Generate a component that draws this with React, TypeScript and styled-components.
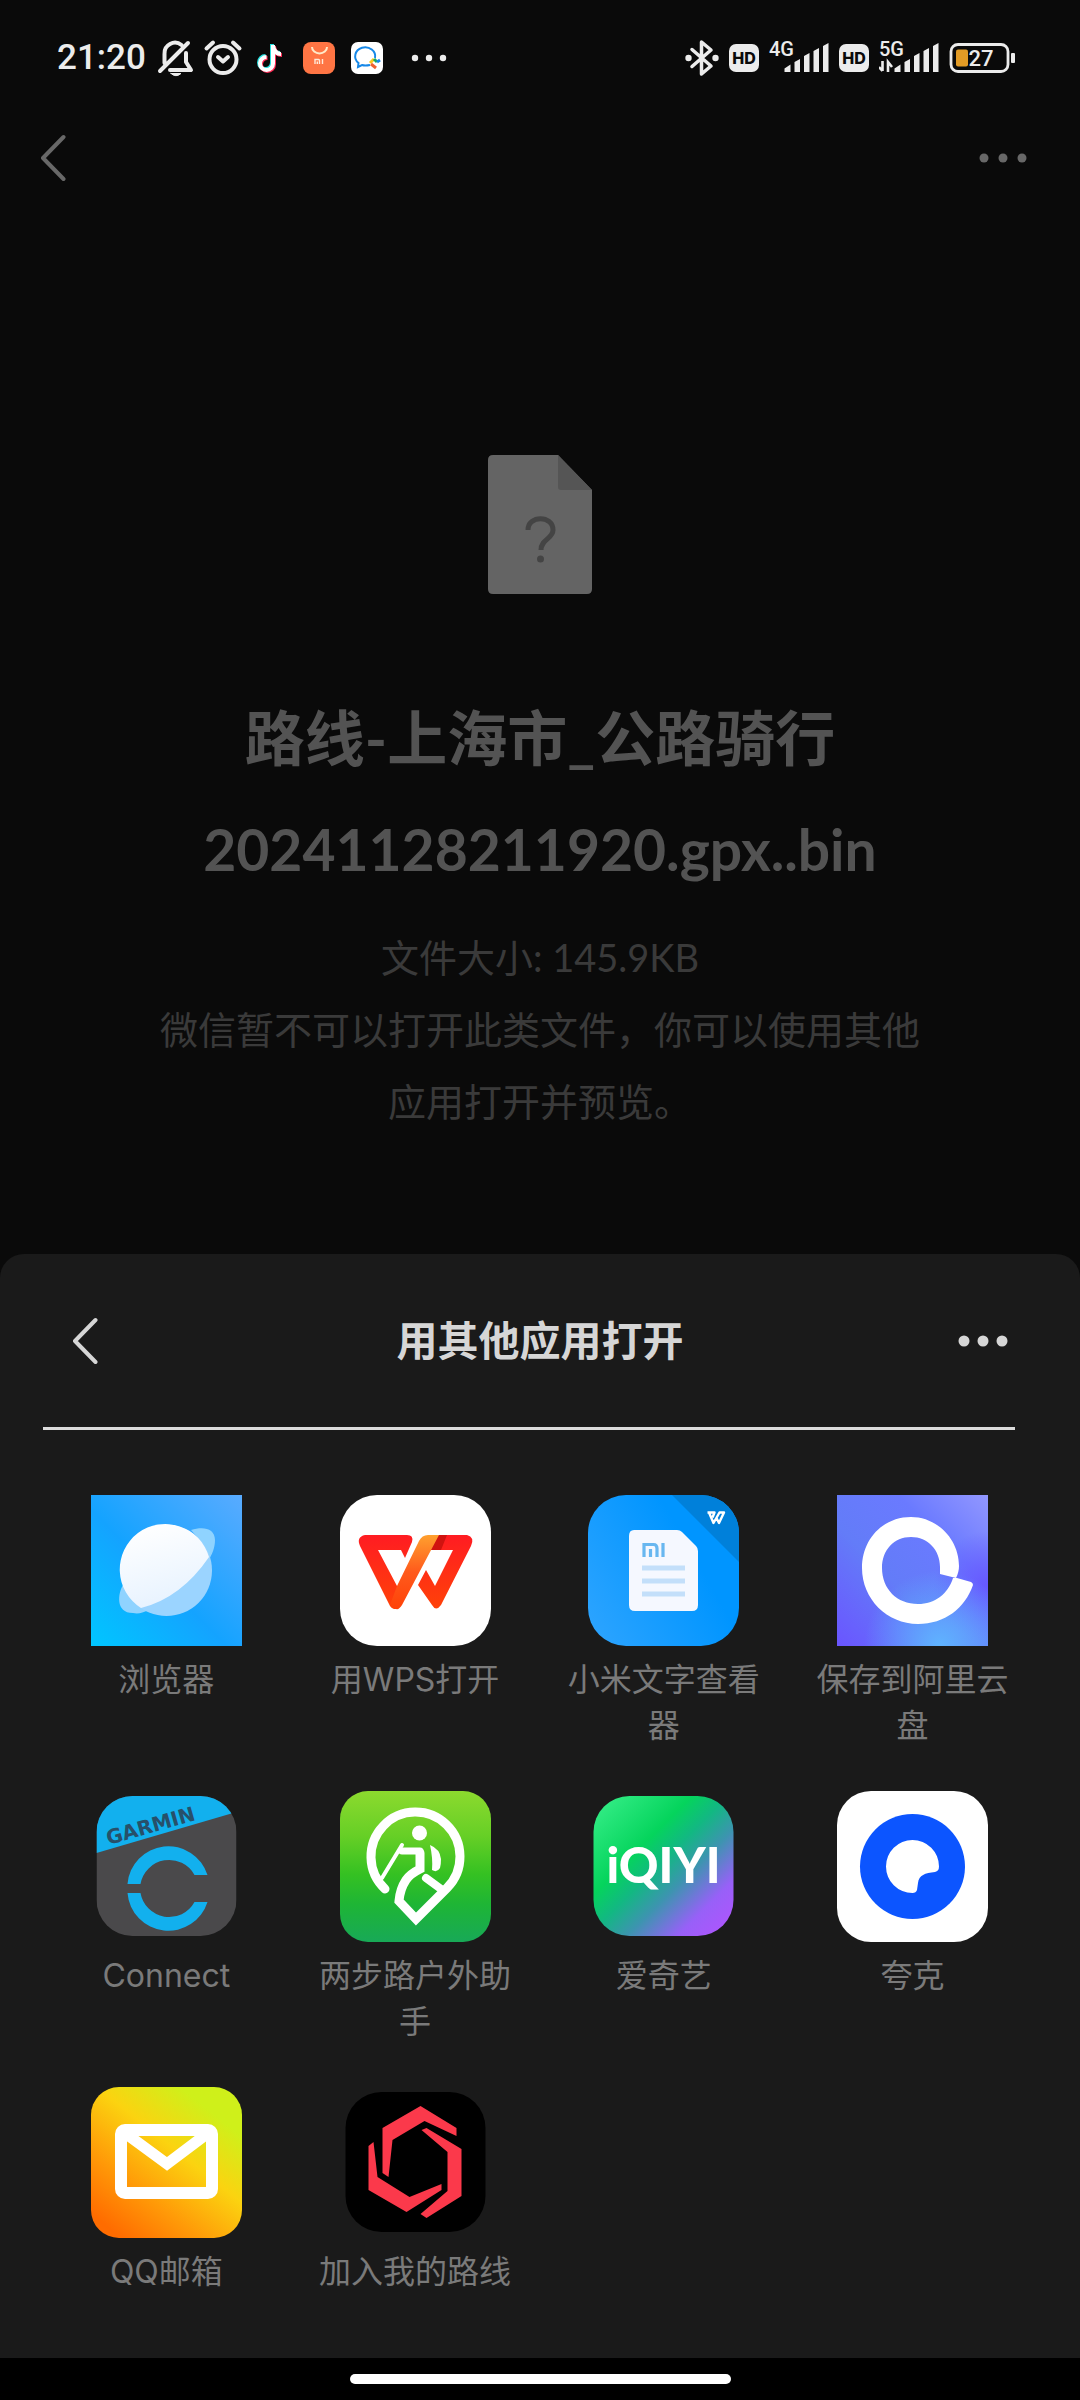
import React from 'react';
import styled, { createGlobalStyle } from 'styled-components';

const GlobalStyle = createGlobalStyle`
  *, *::before, *::after { box-sizing: border-box; }
  body { margin: 0; background: #000; }
  button { border: 0; padding: 0; background: none; color: inherit; font: inherit; cursor: pointer; }
`;

const Screen = styled.div`
  display: flex;
  flex-direction: column;
  min-height: 100vh;
  background: #0a0a0a;
  font-family: Lato, "Noto Sans CJK SC", sans-serif;
`;

const StatusBar = styled.div`
  display: flex;
  align-items: center;
  justify-content: space-between;
  height: 116px;
  padding: 0 64px 0 57px;
  color: #ececec;
`;

const StatusGroup = styled.div<{ $gap: number }>`
  display: flex;
  align-items: center;
  gap: ${(p) => p.$gap}px;
`;

const Clock = styled.time`
  min-width: 85px;
  font: 500 35px/40px Roboto, sans-serif;
`;

const StatusIcon = styled.svg`
  display: block;
  height: 38px;
  flex: none;
  overflow: visible;
`;

const MoreNotices = styled(StatusIcon)`
  margin-left: 14px;
`;

const SignalBox = styled.span`
  display: flex;
  flex-direction: column;
  width: 60px;
  height: 40px;
  font: 500 20px/22px Roboto, sans-serif;
`;

const SignalBars = styled.svg`
  display: block;
  width: 60px;
  height: 33px;
  margin-top: -17px;
  flex: none;
`;

const HdBadge = styled.span`
  width: 30px;
  height: 28px;
  border-radius: 7px;
  background: #ececec;
  color: #0a0a0a;
  font: 800 16px/28px Inter, sans-serif;
  text-align: center;
`;

const NavBar = styled.header`
  display: flex;
  align-items: center;
  justify-content: space-between;
  height: 84px;
  padding: 0 52px 0 40px;
  color: #686868;
`;

const IconButton = styled.button`
  display: flex;
  align-items: center;
  height: 48px;
`;

const FilePanel = styled.main`
  display: flex;
  flex: 1;
  flex-direction: column;
  align-items: center;
  padding: 255px 150px 112px;
  text-align: center;
`;

const FileName = styled.h1`
  max-width: 780px;
  margin: 89px 0 17px;
  color: #535353;
  font-size: 60px;
  font-weight: 700;
  line-height: 110px;
  overflow-wrap: anywhere;
`;

const FileStamp = styled.span`
  font-size: 57px;
`;

const FileNote = styled.p`
  max-width: 780px;
  margin: 0;
  color: #3a3a3a;
  font-size: 38px;
  line-height: 72px;
`;

const Sheet = styled.section`
  border-radius: 24px 24px 0 0;
  background: #1a1a1a;
`;

const SheetHeader = styled.header`
  display: grid;
  grid-template-columns: 56px 1fr 56px;
  align-items: center;
  height: 176px;
  margin: 0 65px 0 43px;
  padding: 0 7px 0 29px;
  border-bottom: 3px solid #dcdcdc;
  color: #d6d6d6;

  ${IconButton}:last-child {
    justify-self: end;
  }
`;

const SheetTitle = styled.h2`
  margin: 0;
  font-size: 41px;
  font-weight: 700;
  line-height: 56px;
  text-align: center;
`;

const AppGrid = styled.ul`
  display: grid;
  grid-template-columns: repeat(4, 1fr);
  grid-auto-rows: minmax(255px, auto);
  row-gap: 41px;
  margin: 0;
  padding: 65px 43px 16px 42px;
  list-style: none;
`;

const AppButton = styled.button`
  display: flex;
  flex-direction: column;
  align-items: center;
  gap: 11px;
  width: 100%;
`;

const AppArt = styled.svg`
  display: block;
  width: 151px;
  height: 151px;
`;

const AppLabel = styled.span`
  max-width: 210px;
  color: #7a7a7a;
  font-family: Inter, "Noto Sans CJK SC", sans-serif;
  font-size: 32px;
  line-height: 46px;
`;

const HomeBar = styled.footer`
  display: flex;
  align-items: center;
  justify-content: center;
  height: 42px;
  background: #000;
`;

const HomeHandle = styled.div`
  width: 381px;
  height: 10px;
  border-radius: 5px;
  background: #fff;
`;

const Chevron = () => (
  <svg width="26" height="48" viewBox="0 0 26 48" fill="none" stroke="currentColor" strokeWidth="4" strokeLinecap="round" strokeLinejoin="round" aria-hidden="true">
    <path d="M23.500 3 3 24l20.500 21" />
  </svg>
);

const Dots = ({ r }: { r: number }) => (
  <svg width="50" height="14" viewBox="0 0 50 14" fill="currentColor" aria-hidden="true">
    <circle cx="6" cy="7" r={r} />
    <circle cx="25" cy="7" r={r} />
    <circle cx="44" cy="7" r={r} />
  </svg>
);

const Signal = ({ label, busy }: { label: string; busy?: boolean }) => (
  <SignalBox>
    {label}
    <SignalBars viewBox="0 0 60 33" fill="currentColor" aria-hidden="true">
      <path d="M15.500 29v-3.500l6-4V29zM25.500 29V19l5.500-3v13zM35 29V13l5.500-3v19zM44.500 29V8l5.500-3v24zM54 29V3l5.500-3v29z" />
      {busy && <path d="M3.500 18v10M0 24l3.500 4M9 29V19l4 5" fill="none" stroke="currentColor" strokeWidth="2.600" />}
    </SignalBars>
  </SignalBox>
);

const BrowserIcon = () => (
  <AppArt viewBox="0 0 151 151" aria-hidden="true">
    <defs>
      <linearGradient id="br-bg" x1="0" y1="1" x2="1" y2="0">
        <stop offset="0" stopColor="#00c6ff" />
        <stop offset=".45" stopColor="#14a3ff" />
        <stop offset="1" stopColor="#59abff" />
      </linearGradient>
      <linearGradient id="br-w" x1=".3" y1="0" x2=".6" y2="1">
        <stop offset="0" stopColor="#fff" />
        <stop offset="1" stopColor="#e6f2ff" />
      </linearGradient>
    </defs>
    <path fill="url(#br-bg)" d="M0 0h151v151H0z" />
    <path fill="#8fd3ff" d="M100 35c12-4 24-2 24 10 0 8-3 15-7 21q-5-19-17-31zM32 90c-5 8-8 28 10 28 5 1 10 0 15-3q-17-8-25-25z" />
    <circle cx="75.500" cy="75.500" r="45.500" fill="#9bd4ff" />
    <path fill="url(#br-w)" d="M118 62A45.500 45.500 0 1 0 50 113Q90 103 118 62z" />
  </AppArt>
);

const WpsIcon = () => (
  <AppArt viewBox="0 0 151 151" aria-hidden="true">
    <defs>
      <linearGradient id="wps-r" x1="0" y1="0" x2="0" y2="1">
        <stop offset="0" stopColor="#ff1c22" />
        <stop offset="1" stopColor="#ff4208" />
      </linearGradient>
      <linearGradient id="wps-o" x1="0" y1="0" x2="0" y2="1">
        <stop offset="0" stopColor="#ffa02e" />
        <stop offset=".5" stopColor="#ff5a1c" />
        <stop offset="1" stopColor="#ff4208" />
      </linearGradient>
    </defs>
    <rect width="151" height="151" rx="37" fill="#fff" />
    <path fill="url(#wps-r)" d="M25 40h42q7 0 5 7l-7 16-4-8H38l19 36 3 18q-5 9-10 2L20 51q-4-9 5-11zM93 40h34q8 2 4 11L101 110q-5 7-9 0L78 90l8-15 9 16 18-36H85z" />
    <path fill="#d0130f" d="M97 40h10l-6 15H90z" />
    <path fill="url(#wps-o)" d="M57 91 79 46q3-6 9-6h11L62 110q-3 5-6 4-4 0-6-4z" />
  </AppArt>
);

const MiDocIcon = () => (
  <AppArt viewBox="0 0 151 151" aria-hidden="true">
    <defs>
      <linearGradient id="mi-bg" x1="0" y1=".8" x2=".7" y2=".4">
        <stop offset="0" stopColor="#2aa3ff" />
        <stop offset="1" stopColor="#0095ff" />
      </linearGradient>
      <clipPath id="mi-clip"><rect width="151" height="151" rx="38" /></clipPath>
    </defs>
    <g clipPath="url(#mi-clip)">
      <path fill="url(#mi-bg)" d="M0 0h151v151H0z" />
      <path fill="#0080da" d="M84 0h67v67z" />
    </g>
    <path d="M119.500 17.500h7l-2 5M121 17.500l4.500 10.500 6-10.500h4.500l-5 10.500-2.500-5" fill="none" stroke="#fff" strokeWidth="2.400" strokeLinejoin="round" />
    <path fill="#f5f8ff" d="M46 35h43q3 0 5 2l14 14q2 2 2 5v54q0 6-6 6H47q-6 0-6-6V41q0-6 5-6z" />
    <path d="M56 62V49.500h9.500q3.500 0 3.500 4V62M62.500 54v8M75 48v14" fill="none" stroke="#68b7f0" strokeWidth="3.200" />
    <path d="M54 73h43M54 86h43M54 99h43" stroke="#c3dffa" strokeWidth="5" />
  </AppArt>
);

const CloudDriveIcon = () => (
  <AppArt viewBox="0 0 151 151" aria-hidden="true">
    <defs>
      <linearGradient id="al-bg" x1="0" y1="1" x2="1" y2="0">
        <stop offset="0" stopColor="#6a55ff" />
        <stop offset=".4" stopColor="#637cf8" />
        <stop offset=".7" stopColor="#6a7aff" />
        <stop offset="1" stopColor="#9297ff" />
      </linearGradient>
      <radialGradient id="al-c" cx=".68" cy="1" r=".5">
        <stop offset="0" stopColor="#5fb4ff" />
        <stop offset="1" stopColor="#5fb4ff" stopOpacity="0" />
      </radialGradient>
      <radialGradient id="al-p" cx="1" cy=".6" r=".36">
        <stop offset="0" stopColor="#6758ff" />
        <stop offset="1" stopColor="#6758ff" stopOpacity="0" />
      </radialGradient>
    </defs>
    <path fill="url(#al-bg)" d="M0 0h151v151H0z" />
    <path fill="url(#al-p)" d="M0 0h151v151H0z" />
    <path fill="url(#al-c)" d="M0 0h151v151H0z" />
    <path fill="#fff" d="M103 79l16 4c2-4 3-8 3-12 0-27-22-49-48-49-28 0-49 22-49 51 0 31 25 56 56 56 27 0 47-16 55-39q0-2-2-3l-14-4h-4c-5 16-18 26-35 26-21 0-36-15-36-36 0-18 12-31 29-31s29 13 29 30z" />
  </AppArt>
);

const GarminIcon = () => (
  <AppArt viewBox="0 0 151 151" aria-hidden="true">
    <defs><clipPath id="ga-clip"><rect width="140" height="140" rx="36" /></clipPath></defs>
    <g transform="translate(5.500 5)">
      <g clipPath="url(#ga-clip)">
        <path fill="#4a494b" d="M0 0h140v140H0z" />
        <path fill="#12b0ee" d="M0 0h140v16L0 57z" />
      </g>
      <text x="12" y="49" transform="rotate(-16 12 49)" fill="#27506a" fontFamily="DejaVu Sans, sans-serif" fontWeight="700" fontSize="20">GARMIN</text>
      <path fill="#12b0ee" d="M31 88A41 41 0 0 1 111 79H98A29 29 0 0 0 44 88zM31 97A41 41 0 0 0 111 106H98A29 29 0 0 1 44 97z" />
    </g>
  </AppArt>
);

const HikingIcon = () => (
  <AppArt viewBox="0 0 151 151" aria-hidden="true">
    <defs>
      <linearGradient id="hk-bg" x1="0" y1="0" x2="0" y2="1">
        <stop offset="0" stopColor="#8cda2e" />
        <stop offset=".3" stopColor="#66cf26" />
        <stop offset=".55" stopColor="#35c122" />
        <stop offset=".75" stopColor="#1eb535" />
        <stop offset="1" stopColor="#18a957" />
      </linearGradient>
    </defs>
    <rect width="151" height="151" rx="28" fill="url(#hk-bg)" />
    <g fill="none" stroke="#fff" strokeLinecap="round">
      <path strokeWidth="9" d="M45 98A44.500 44.500 0 1 1 107 97L76 128 59 110Q60 98 66 89 70 83 80 78V62" />
      <path strokeWidth="7" strokeLinejoin="round" d="M80 60H62" />
      <path strokeWidth="4" d="M62 54 42 87" />
      <path strokeWidth="8" d="M86 87 101 98" />
    </g>
    <circle cx="79.500" cy="42" r="7.500" fill="#fff" />
    <path fill="#fff" d="M90 54q10 4 11 14 0 6-1 9-3 5-8 2 1-12-2-25z" />
  </AppArt>
);

const IqiyiIcon = () => (
  <AppArt viewBox="0 0 151 151" aria-hidden="true">
    <defs>
      <linearGradient id="iq-bg" x1="0" y1="0" x2="1" y2="1">
        <stop offset="0" stopColor="#3af08c" />
        <stop offset=".35" stopColor="#05d45c" />
        <stop offset=".48" stopColor="#12b882" />
        <stop offset=".62" stopColor="#3d94b0" />
        <stop offset=".8" stopColor="#9860f8" />
        <stop offset="1" stopColor="#b552ff" />
      </linearGradient>
    </defs>
    <rect x="5.500" y="5" width="140" height="140" rx="36" fill="url(#iq-bg)" />
    <text x="75.500" y="92" textAnchor="middle" fill="#fff" fontFamily="Lato, sans-serif" fontWeight="900" fontSize="49">iQIYI</text>
  </AppArt>
);

const QuarkIcon = () => (
  <AppArt viewBox="0 0 151 151" aria-hidden="true">
    <rect width="151" height="151" rx="34" fill="#fff" />
    <circle cx="75.500" cy="75.500" r="52.500" fill="#0c55ff" />
    <path fill="#fff" d="M75.500 102A26.500 26.500 0 1 1 102 75.500Q102 80 98 81C88 82 82 84 81 92L80 99Q79 102 75.500 102z" />
  </AppArt>
);

const MailIcon = () => (
  <AppArt viewBox="0 0 151 151" aria-hidden="true">
    <defs>
      <linearGradient id="qm-bg" x1=".1" y1="1" x2=".9" y2="0">
        <stop offset=".05" stopColor="#ff6c00" />
        <stop offset=".3" stopColor="#ff9a08" />
        <stop offset=".58" stopColor="#fbd310" />
        <stop offset=".85" stopColor="#cff01a" />
      </linearGradient>
    </defs>
    <rect width="151" height="151" rx="28" fill="url(#qm-bg)" />
    <g fill="none" stroke="#fff">
      <rect x="30" y="43" width="91" height="63" rx="4" strokeWidth="12" />
      <path d="M34 46 76 77 117 46" strokeWidth="11" />
    </g>
  </AppArt>
);

const RouteIcon = () => (
  <AppArt viewBox="0 0 151 151" aria-hidden="true">
    <g transform="translate(5.500 5)">
      <rect width="140" height="140" rx="36" fill="#000" />
      <path fill="#fb394b" d="M37 36 75 14l36 22v8L79 29 47 48l-4 37-6-4zM76 38l5-2 35 21v47l-35 22-6-4 27-23V60zM23 54l5-4 4 35 32 20 32-13v6l-35 22-38-22z" />
    </g>
  </AppArt>
);

const apps: { name: string; Icon: React.FC }[] = [
  { name: '浏览器', Icon: BrowserIcon },
  { name: '用WPS打开', Icon: WpsIcon },
  { name: '小米文字查看器', Icon: MiDocIcon },
  { name: '保存到阿里云盘', Icon: CloudDriveIcon },
  { name: 'Connect', Icon: GarminIcon },
  { name: '两步路户外助手', Icon: HikingIcon },
  { name: '爱奇艺', Icon: IqiyiIcon },
  { name: '夸克', Icon: QuarkIcon },
  { name: 'QQ邮箱', Icon: MailIcon },
  { name: '加入我的路线', Icon: RouteIcon },
];

const note = 'M21 6v18.500a6.500 6.500 0 1 1-6.500-6.500M21 7c1 5 4 8 8 8';

export default function App() {
  return (
    <Screen lang="zh-CN">
      <GlobalStyle />
      <StatusBar>
        <StatusGroup $gap={10}>
          <Clock>21:20</Clock>
          <StatusIcon width="38" viewBox="0 0 38 38" fill="none" stroke="currentColor" strokeWidth="4" strokeLinecap="round" aria-hidden="true">
            <path d="M32 4 4 32M8.500 24V15a10.500 10.500 0 0 1 17-9M30 14v9l5 8H14" strokeLinejoin="round" />
            <path d="M15 34.500h10q-5 4.500-10 0z" fill="currentColor" strokeWidth="1" />
          </StatusIcon>
          <StatusIcon width="38" viewBox="0 0 38 38" fill="none" stroke="currentColor" strokeWidth="4" strokeLinecap="round" strokeLinejoin="round" aria-hidden="true">
            <circle cx="19" cy="20.500" r="13.500" />
            <path d="M14 18l5 4.500 5-4.500M2.500 9.500l6.500-6M35.500 9.500l-6.500-6" />
          </StatusIcon>
          <StatusIcon width="38" viewBox="0 0 38 38" fill="none" strokeWidth="4" aria-hidden="true">
            <path d={note} stroke="#25e0e0" transform="translate(-1 -1)" />
            <path d={note} stroke="#ff2b55" transform="translate(1 1)" />
            <path d={note} stroke="#fff" />
          </StatusIcon>
          <StatusIcon width="38" viewBox="0 0 38 38" fill="none" aria-hidden="true">
            <rect x="3" y="3" width="32" height="32" rx="8" fill="#ff7544" />
            <path d="M12 8a7.500 6.500 0 0 0 15 0" stroke="#ffe9c8" strokeWidth="2" />
            <path d="M15 25v-4.500h3.500q1 0 1 1V25M17.300 22.500V25M22.500 20v5" stroke="#ffe9d8" strokeWidth="1.400" />
          </StatusIcon>
          <StatusIcon width="38" viewBox="0 0 38 38" fill="none" strokeWidth="2" aria-hidden="true">
            <rect x="3" y="3" width="32" height="32" rx="7" fill="#fff" />
            <path d="M22 26q-5 1-8 0l-4 2 .5-4A10 9 0 1 1 27 19" stroke="#1688e8" />
            <path d="M22 24l4-4" stroke="#f8c71c" strokeWidth="3" />
            <path d="M26 20l3 3" stroke="#1aa860" strokeWidth="3" />
            <path d="M29 23l3-2" stroke="#1688e8" strokeWidth="3" />
            <path d="M23 25l5 4" stroke="#f06030" strokeWidth="3" />
          </StatusIcon>
          <MoreNotices width="38" viewBox="0 0 38 38" fill="currentColor" aria-hidden="true">
            <circle cx="5" cy="19" r="3.200" />
            <circle cx="19" cy="19" r="3.200" />
            <circle cx="33" cy="19" r="3.200" />
          </MoreNotices>
        </StatusGroup>
        <StatusGroup $gap={10}>
          <StatusIcon width="34" viewBox="0 0 34 38" fill="none" stroke="currentColor" strokeWidth="3.500" strokeLinejoin="round" strokeLinecap="round" aria-hidden="true">
            <path d="M7 10.500 26 27 16.500 35V3L26 11 7 27.500" />
            <g fill="currentColor" stroke="none"><circle cx="3.500" cy="19" r="3.200" /><circle cx="30.500" cy="19" r="3.200" /></g>
          </StatusIcon>
          <HdBadge>HD</HdBadge>
          <Signal label="4G" />
          <HdBadge>HD</HdBadge>
          <Signal label="5G" busy />
          <StatusIcon width="67" viewBox="0 0 67 38" aria-hidden="true">
            <rect x="2" y="5.500" width="57" height="27" rx="7" fill="none" stroke="currentColor" strokeWidth="2.800" />
            <rect x="7" y="10.500" width="12" height="17" rx="2" fill="#e29b25" />
            <rect x="62" y="14" width="4" height="10" rx="1" fill="currentColor" />
            <text x="19.500" y="27" fill="currentColor" fontFamily="Roboto, sans-serif" fontSize="22" fontWeight="500">27</text>
          </StatusIcon>
        </StatusGroup>
      </StatusBar>
      <NavBar>
        <IconButton type="button" aria-label="返回"><Chevron /></IconButton>
        <IconButton type="button" aria-label="更多"><Dots r={4.5} /></IconButton>
      </NavBar>
      <FilePanel>
        <svg width="104" height="139" viewBox="0 0 104 139" aria-hidden="true">
          <path fill="#646464" d="M5 0h65l34 35v99q0 5-5 5H5q-5 0-5-5V5q0-5 5-5z" />
          <path fill="#555" d="M70 0l34 35H73q-3 0-3-3z" />
          <path d="M40 75c0-15 25-15 25 0 0 9-12 9-12 20" fill="none" stroke="#444" strokeWidth="5" />
          <circle cx="52.500" cy="104" r="3.500" fill="#444" />
        </svg>
        <FileName>路线-上海市_公路骑行<FileStamp>20241128211920.gpx..bin</FileStamp></FileName>
        <FileNote>文件大小: 145.9KB</FileNote>
        <FileNote>微信暂不可以打开此类文件，你可以使用其他应用打开并预览。</FileNote>
      </FilePanel>
      <Sheet>
        <SheetHeader>
          <IconButton type="button" aria-label="返回"><Chevron /></IconButton>
          <SheetTitle>用其他应用打开</SheetTitle>
          <IconButton type="button" aria-label="更多"><Dots r={5.5} /></IconButton>
        </SheetHeader>
        <AppGrid>
          {apps.map(({ name, Icon }) => (
            <li key={name}>
              <AppButton type="button">
                <Icon />
                <AppLabel>{name}</AppLabel>
              </AppButton>
            </li>
          ))}
        </AppGrid>
      </Sheet>
      <HomeBar><HomeHandle /></HomeBar>
    </Screen>
  );
}
